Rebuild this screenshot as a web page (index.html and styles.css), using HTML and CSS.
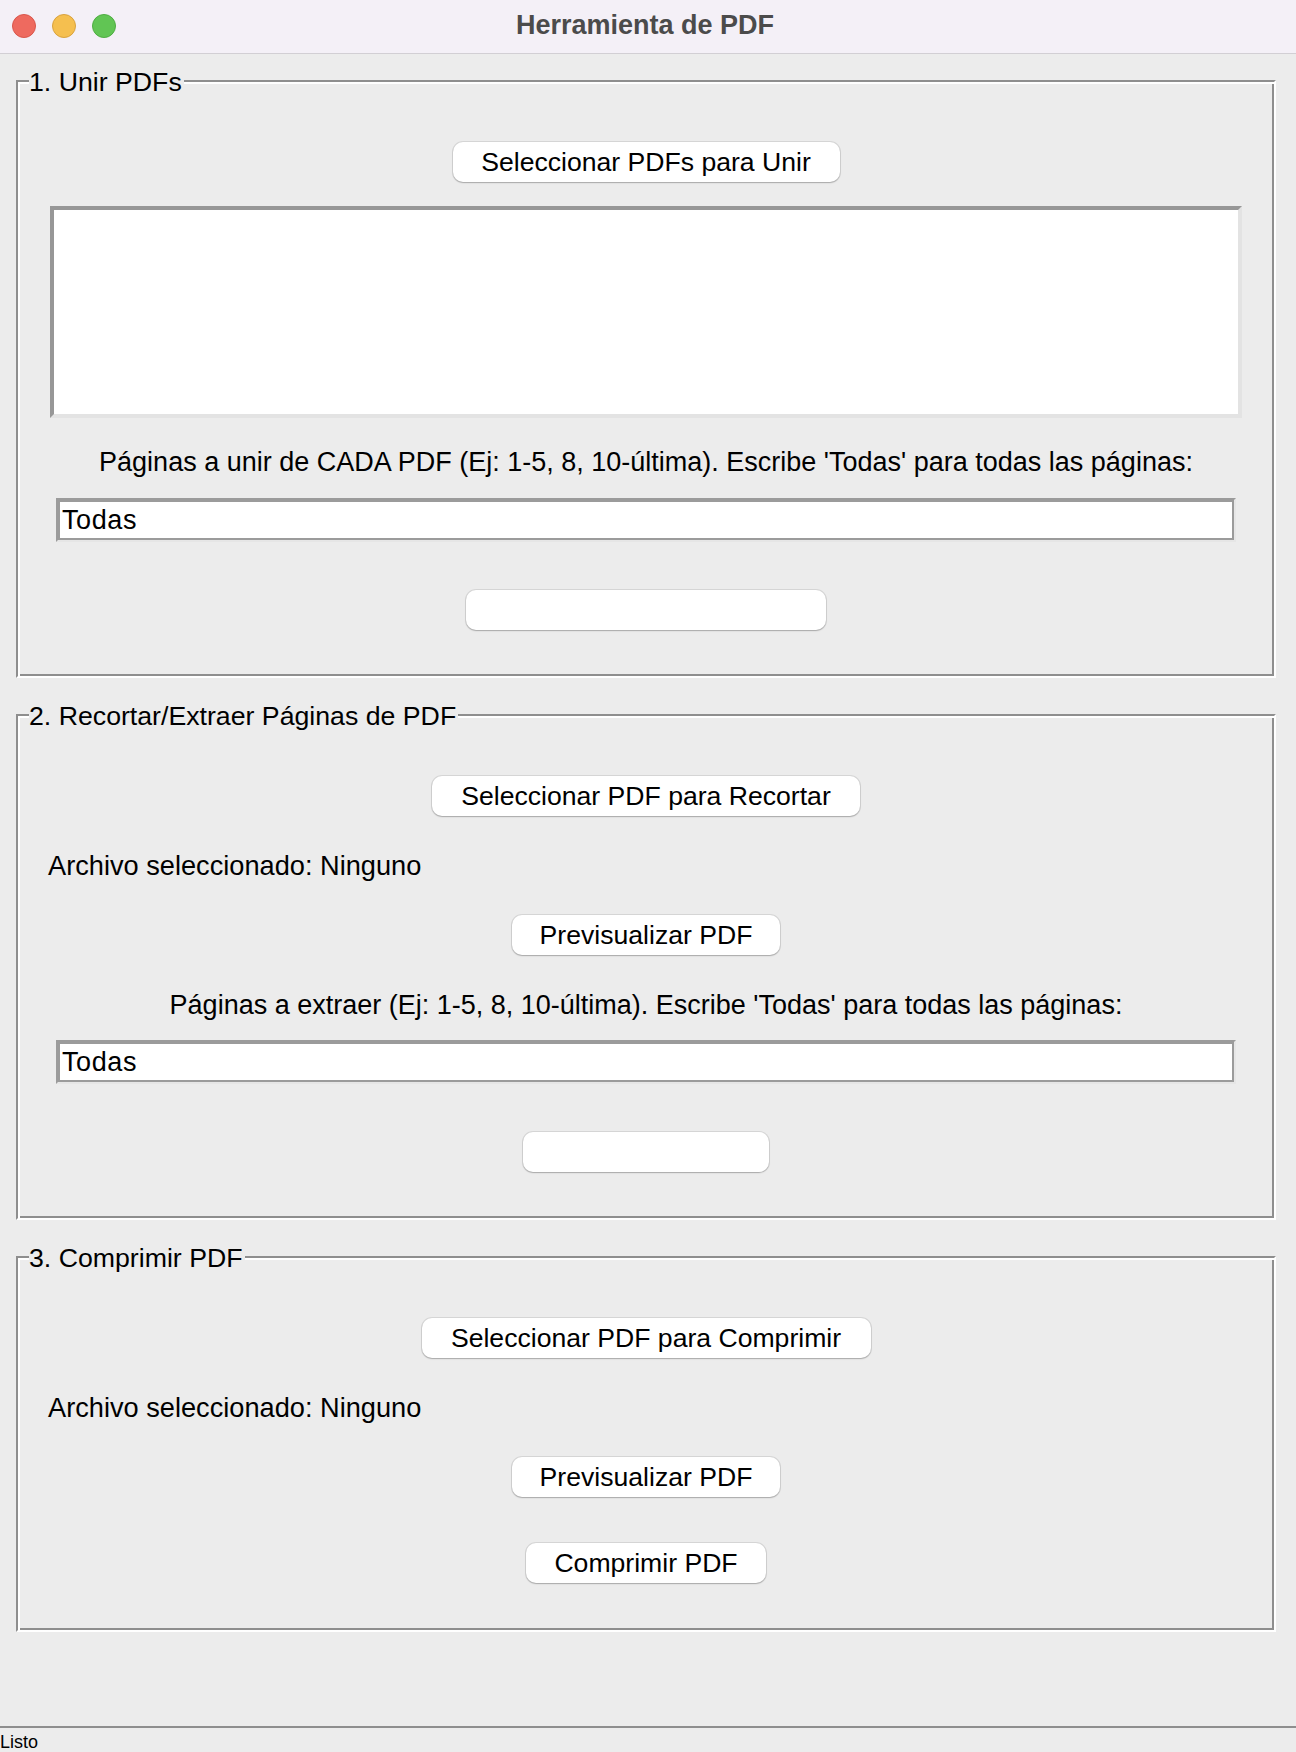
FILE: index.html
```html
<!DOCTYPE html>
<html lang="es">
<head>
<meta charset="utf-8">
<title>Herramienta de PDF</title>
<link rel="stylesheet" href="styles.css">
</head>
<body>
  <header class="titlebar">
    <div class="lights">
      <span class="light red"></span>
      <span class="light yellow"></span>
      <span class="light green"></span>
    </div>
    <div class="title">Herramienta de PDF</div>
    <div class="spacer"></div>
  </header>

  <main class="content">
    <section class="group">
      <span class="group-label">1. Unir PDFs</span>
      <button class="btn w-sel-unir">Seleccionar PDFs para Unir</button>
      <div class="listbox"></div>
      <p class="caption caption-list">Páginas a unir de CADA PDF (Ej: 1-5, 8, 10-última). Escribe 'Todas' para todas las páginas:</p>
      <input class="entry" type="text" value="Todas">
      <button class="btn btn-action w-blank-1"></button>
    </section>

    <section class="group">
      <span class="group-label">2. Recortar/Extraer Páginas de PDF</span>
      <button class="btn w-sel-recortar">Seleccionar PDF para Recortar</button>
      <p class="file-label">Archivo seleccionado: Ninguno</p>
      <button class="btn btn-preview w-preview">Previsualizar PDF</button>
      <p class="caption caption-after">Páginas a extraer (Ej: 1-5, 8, 10-última). Escribe 'Todas' para todas las páginas:</p>
      <input class="entry entry-tight" type="text" value="Todas">
      <button class="btn btn-action w-blank-2"></button>
    </section>

    <section class="group group-last">
      <span class="group-label">3. Comprimir PDF</span>
      <button class="btn w-sel-comprimir">Seleccionar PDF para Comprimir</button>
      <p class="file-label">Archivo seleccionado: Ninguno</p>
      <button class="btn btn-preview w-preview">Previsualizar PDF</button>
      <button class="btn btn-compress w-compress">Comprimir PDF</button>
    </section>
  </main>

  <footer class="statusbar">Listo</footer>
</body>
</html>
```

FILE: styles.css
```css
* {
  box-sizing: border-box;
}

html,
body {
  margin: 0;
  padding: 0;
}

body {
  width: 1296px;
  height: 1752px;
  overflow: hidden;
  background: #ececec;
  color: #000;
  font-family: "Liberation Sans", Arial, sans-serif;
  font-size: 26px;
  display: flex;
  flex-direction: column;
}

/* ---------- title bar ---------- */
.titlebar {
  flex: none;
  height: 54px;
  padding-right: 6px;
  background: #f4f0f7;
  border-bottom: 1px solid #d2cfd4;
  display: grid;
  grid-template-columns: 1fr auto 1fr;
  align-items: start;
}

.lights {
  display: flex;
  gap: 16px;
  padding: 14px 0 0 12px;
}

.light {
  width: 24px;
  height: 24px;
  border-radius: 50%;
}

.red {
  background: #ee6a5f;
  border: 1px solid #d9564c;
}

.yellow {
  background: #f5bf4f;
  border: 1px solid #d9a23e;
}

.green {
  background: #61c554;
  border: 1px solid #4ead42;
}

.title {
  font-weight: bold;
  font-size: 27px;
  line-height: 50px;
  color: #4b4b4b;
  white-space: nowrap;
}

/* ---------- content ---------- */
.content {
  flex: 1;
  padding: 26px 20px 0 16px;
  display: flex;
  flex-direction: column;
  gap: 36px;
}

.group {
  position: relative;
  display: flex;
  flex-direction: column;
  align-items: center;
  border: 2px solid;
  border-color: #8e8e8e #fff #fff #8e8e8e;
  box-shadow: inset 2px 2px 0 #fff, inset -2px -2px 0 #8e8e8e;
  padding: 60px 0 46px;
}

.group-last {
  padding-bottom: 47px;
}

.group-label {
  position: absolute;
  top: -15px;
  left: 11px;
  padding: 0 2px 0 0;
  background: #ececec;
  font-size: 26.7px;
  line-height: 30px;
  white-space: nowrap;
}

/* ---------- buttons ---------- */
.btn {
  flex: none;
  height: 40px;
  padding: 0;
  border: none;
  border-radius: 10px;
  background: #fff;
  color: #000;
  font-family: "Liberation Sans", Arial, sans-serif;
  font-size: 26.6px;
  line-height: 40px;
  white-space: nowrap;
  box-shadow: 0 0 0 1px rgba(0, 0, 0, 0.09), 0 1px 1.5px rgba(0, 0, 0, 0.22);
}

.btn-action {
  margin-top: 48px;
}

.btn-preview {
  margin-top: 33px;
}

.btn-compress {
  margin-top: 46px;
}

.w-sel-unir { width: 387px; }
.w-sel-recortar { width: 428px; }
.w-sel-comprimir { width: 449px; }
.w-preview { width: 268px; }
.w-compress { width: 240px; }
.w-blank-1 { width: 360px; }
.w-blank-2 { width: 246px; }

/* ---------- listbox ---------- */
.listbox {
  flex: none;
  width: 1192px;
  height: 212px;
  margin-top: 24px;
  background: #fff;
  border: 4px solid;
  border-color: #979797 #e3e3e3 #e3e3e3 #979797;
}

/* ---------- labels ---------- */
.caption {
  margin: 28px 0 0;
  font-size: 27px;
  line-height: 32px;
  text-align: center;
  white-space: nowrap;
}

.caption-after {
  margin-top: 34px;
}

.file-label {
  align-self: flex-start;
  margin: 34px 0 0 30px;
  font-size: 27.2px;
  line-height: 32px;
  white-space: nowrap;
}

/* ---------- entry ---------- */
.entry {
  flex: none;
  width: 1180px;
  height: 44px;
  margin-top: 20px;
  padding: 0 4px;
  border: 2px solid;
  border-color: #9b9b9b #e6e6e6 #e6e6e6 #9b9b9b;
  box-shadow: inset 0 0 0 2px #9b9b9b;
  background: #fff;
  color: #000;
  font-family: "Liberation Sans", Arial, sans-serif;
  font-size: 27px;
  letter-spacing: 0.6px;
  outline: none;
}

.entry-tight {
  margin-top: 19px;
}

/* ---------- status bar ---------- */
.statusbar {
  flex: none;
  height: 26px;
  border-top: 2px solid #8e8e8e;
  padding-top: 4px;
  font-size: 18px;
  line-height: 20px;
  white-space: nowrap;
}
```
